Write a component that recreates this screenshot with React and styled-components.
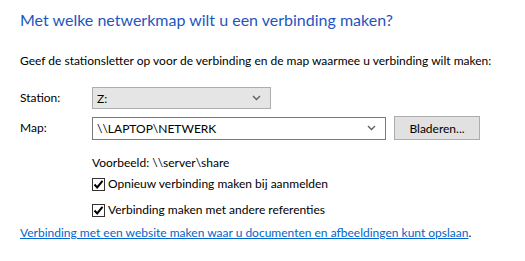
import React, { useState } from 'react'
import styled, { createGlobalStyle } from 'styled-components'

const GlobalStyle = createGlobalStyle`
  html, body {
    margin: 0;
    padding: 0;
    background: #ffffff;
  }
  body {
    font-family: Lato, "Noto Sans", sans-serif;
    font-size: 12px;
    color: #000000;
  }
`

function Chevron() {
  return (
    <svg width="9" height="6" viewBox="0 0 9 6">
      <path d="M1 1 L4.5 4.5 L8 1" fill="none" stroke="#606060" strokeWidth="1.4" />
    </svg>
  )
}

function Check() {
  return (
    <svg width="11" height="11" viewBox="0 0 11 11">
      <path d="M1.5 5.5 L4.2 8.4 L9.5 1.8" fill="none" stroke="#000" strokeWidth="2" />
    </svg>
  )
}

function CheckRow({ label, checked, onToggle }) {
  return (
    <CheckLabel onClick={onToggle}>
      <Box>{checked && <Check />}</Box>
      <span>{label}</span>
    </CheckLabel>
  )
}

export default function App() {
  const [reconnect, setReconnect] = useState(true)
  const [otherCreds, setOtherCreds] = useState(true)

  return (
    <Page>
      <GlobalStyle />
      <Title>Met welke netwerkmap wilt u een verbinding maken?</Title>
      <Intro>Geef de stationsletter op voor de verbinding en de map waarmee u verbinding wilt maken:</Intro>
      <Form>
        <Label>Station:</Label>
        <Combo variant="list" width="179px">
          <span>Z:</span>
          <Chevron />
        </Combo>
        <Label>Map:</Label>
        <Row>
          <Combo width="294px">
            <span>\\LAPTOP\NETWERK</span>
            <Chevron />
          </Combo>
          <Button>Bladeren...</Button>
        </Row>
        <span />
        <Example>Voorbeeld: \\server\share</Example>
        <span />
        <Checks>
          <CheckRow label="Opnieuw verbinding maken bij aanmelden" checked={reconnect} onToggle={() => setReconnect(!reconnect)} />
          <CheckRow label="Verbinding maken met andere referenties" checked={otherCreds} onToggle={() => setOtherCreds(!otherCreds)} />
        </Checks>
      </Form>
      <Footer>
        <Link href="#">Verbinding met een website maken waar u documenten en afbeeldingen kunt opslaan</Link>.
      </Footer>
    </Page>
  )
}

const Page = styled.div`
  display: flex;
  flex-direction: column;
  padding: 9px 20px 0 20px;
  width: 525px;
  height: 261px;
  box-sizing: border-box;
`

const Title = styled.h1`
  margin: 0;
  font-size: 16px;
  font-weight: 400;
  line-height: 21px;
  color: #1f55c0;
  white-space: nowrap;
`

const Intro = styled.p`
  margin: 23px 0 0 0;
  line-height: 16px;
  white-space: nowrap;
`

const Form = styled.div`
  display: grid;
  grid-template-columns: 72px 1fr;
  align-items: center;
  row-gap: 7px;
  margin-top: 18px;
`

const Label = styled.div`
  line-height: 16px;
`

const Row = styled.div`
  display: flex;
  align-items: center;
  gap: 8px;
`

const Combo = styled.div`
  display: flex;
  align-items: center;
  justify-content: space-between;
  box-sizing: border-box;
  width: ${p => p.width};
  height: ${p => (p.variant === 'list' ? '22px' : '23px')};
  padding: 0 9px 0 4px;
  border: 1px solid ${p => (p.variant === 'list' ? '#adadad' : '#7a7a7a')};
  background: ${p => (p.variant === 'list' ? '#e5e5e5' : '#ffffff')};
`

const Button = styled.button`
  box-sizing: border-box;
  width: 86px;
  height: 24px;
  border: 1px solid #adadad;
  background: #e1e1e1;
  font-family: inherit;
  font-size: 12px;
  color: #000;
  padding: 0;
`

const Example = styled.div`
  line-height: 16px;
  margin-top: 8px;
`

const Checks = styled.div`
  display: flex;
  flex-direction: column;
  gap: 8px;
  margin-top: -3px;
`

const CheckLabel = styled.label`
  display: flex;
  align-items: center;
  gap: 3px;
  line-height: 18px;
  cursor: default;
`

const Box = styled.span`
  display: flex;
  align-items: center;
  justify-content: center;
  box-sizing: border-box;
  width: 13px;
  height: 13px;
  border: 1px solid #333333;
  background: #fff;
`

const Footer = styled.div`
  margin-top: 6px;
  line-height: 16px;
  white-space: nowrap;
`

const Link = styled.a`
  color: #0066cc;
  text-decoration: underline;
`
